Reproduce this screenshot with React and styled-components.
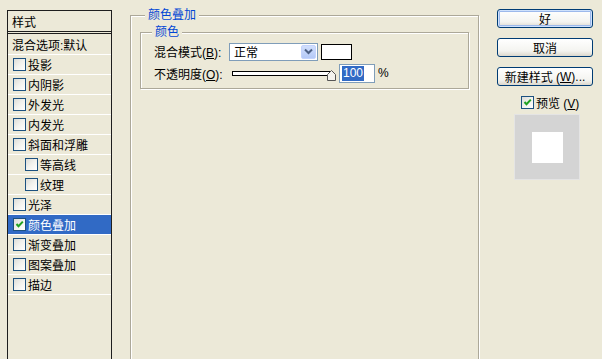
import React from 'react';
import styled, { createGlobalStyle, css } from 'styled-components';

const Global = createGlobalStyle`
  html, body { margin: 0; padding: 0; background: #ECE9D8; }
  body {
    font-family: "Liberation Sans", "Noto Sans CJK SC", sans-serif;
    font-size: 12px;
    color: #000;
  }
  #root { width: 602px; height: 359px; overflow: hidden; }
`;

const Page = styled.div`
  width: 602px;
  height: 359px;
  overflow: hidden;
  display: flex;
  align-items: flex-start;
  background: #ECE9D8;
`;

/* ---------- left styles list ---------- */
const StylesPanel = styled.div`
  margin: 10px 0 0 7px;
  width: 105px;
  height: 360px;
  box-sizing: border-box;
  border: 1px solid #1e1e1e;
  border-bottom: none;
  display: flex;
  flex-direction: column;
`;

const PanelHeader = styled.div`
  height: 20px;
  display: flex;
  align-items: center;
  padding-left: 4px;
  border-bottom: 3px double #1e1e1e;
`;

const BlendRow = styled.div`
  height: 20px;
  display: flex;
  align-items: center;
  padding-left: 4px;
  border-bottom: 1px solid #fff;
`;

const StyleRow = styled.div`
  height: 19px;
  display: flex;
  align-items: center;
  gap: 2px;
  padding-left: ${p => (p.$indent ? 17 : 5)}px;
  border-bottom: 1px solid #fff;
  ${p => p.$selected && css`
    background: #316AC5;
    color: #fff;
  `}
`;

const Box = styled.span`
  width: 13px;
  height: 13px;
  box-sizing: border-box;
  border: 1px solid #1C5180;
  background: linear-gradient(135deg, #DCDCD7 0%, #F2F2EE 50%, #FFFFFF 100%);
  display: inline-flex;
  align-items: center;
  justify-content: center;
  flex: none;
`;

const CheckBox = ({ checked }) => (
  <Box>
    {checked && (
      <svg width="11" height="11" viewBox="0 0 11 11">
        <path d="M2.5 5 L4.5 7.2 L8.8 2.6" fill="none" stroke="#21A121" strokeWidth="2" />
      </svg>
    )}
  </Box>
);

/* ---------- main group ---------- */
const Group = styled.div`
  position: relative;
  box-sizing: border-box;
  border: 1px solid #ACA899;
  box-shadow: inset 1px 1px 0 #fff, 1px 1px 0 #fff;
`;

const OuterGroup = styled(Group)`
  margin: 15px 0 0 18px;
  width: 349px;
  height: 360px;
  padding: 16px 9px 0 9px;
`;

const InnerGroup = styled(Group)`
  width: 329px;
  padding: 9px 0 5px 13px;
  display: flex;
  flex-direction: column;
  gap: 2px;
`;

const GroupTitle = styled.span`
  position: absolute;
  top: -8px;
  left: ${p => p.$left}px;
  padding: 0 3px;
  line-height: 15px;
  background: #ECE9D8;
  color: ${p => p.$color};
`;

const FieldRow = styled.div`
  display: flex;
  align-items: center;
  height: ${p => p.$h}px;
`;

const Label = styled.span`
  width: 75px;
  flex: none;
  white-space: nowrap;
`;

const U = styled.span`
  text-decoration: underline;
`;

const Combo = styled.div`
  width: 89px;
  height: 18px;
  box-sizing: border-box;
  border: 1px solid #7F9DB9;
  background: #fff;
  display: flex;
  align-items: center;
  justify-content: space-between;
  padding: 1px 1px 1px 4px;
`;

const ComboButton = styled.span`
  width: 15px;
  height: 14px;
  border-radius: 2px;
  background: linear-gradient(#D1DFFD, #B4C9F7);
  border: 1px solid #C3D3FD;
  box-sizing: border-box;
  display: flex;
  align-items: center;
  justify-content: center;
`;

const Swatch = styled.span`
  margin-left: 3px;
  width: 31px;
  height: 16px;
  box-sizing: border-box;
  border: 1px solid #000;
  background: #fff;
`;

const Slider = styled.div`
  position: relative;
  margin-left: 3px;
  width: 101px;
  height: 5px;
  box-sizing: border-box;
  border: 1px solid #000;
  background: #fff;
`;

const Thumb = styled.svg`
  position: absolute;
  right: -4px;
  top: -2px;
`;

const NumberBox = styled.div`
  margin-left: 6px;
  width: 36px;
  height: 19px;
  box-sizing: border-box;
  border: 1px solid #7F9DB9;
  background: #fff;
  display: flex;
  align-items: center;
  padding-left: 2px;
`;

const Selected = styled.span`
  background: #316AC5;
  color: #fff;
  line-height: 15px;
  padding: 0 1px;
`;

const Percent = styled.span`
  margin-left: 3px;
`;

/* ---------- right column ---------- */
const Side = styled.div`
  margin: 9px 0 0 18px;
  width: 96px;
  display: flex;
  flex-direction: column;
`;

const Button = styled.div`
  height: 19px;
  box-sizing: border-box;
  margin-bottom: 10px;
  border: 1px solid #003C74;
  border-radius: 3px;
  background: linear-gradient(#FFFFFF 0%, #F4F4F0 70%, #DCD8CD 100%);
  display: flex;
  align-items: center;
  justify-content: center;
  white-space: pre;
  ${p => p.$default && css`
    box-shadow: inset 0 0 0 1px #CEE1FC, inset 0 0 0 2px #9DB9EB;
  `}
`;

const PreviewCheck = styled.div`
  display: flex;
  align-items: center;
  gap: 2px;
  padding-left: 24px;
  height: 13px;
  white-space: pre;
`;

const PreviewBox = styled.div`
  margin: 5px 0 0 17px;
  width: 66px;
  height: 66px;
  box-sizing: border-box;
  border: 1px solid #E4E4E4;
  background: #D4D4D4;
  display: flex;
  align-items: center;
  justify-content: center;
`;

const PreviewInner = styled.div`
  width: 31px;
  height: 31px;
  background: #fff;
`;

const styles = [
  { name: '投影' },
  { name: '内阴影' },
  { name: '外发光' },
  { name: '内发光' },
  { name: '斜面和浮雕' },
  { name: '等高线', indent: true },
  { name: '纹理', indent: true },
  { name: '光泽' },
  { name: '颜色叠加', checked: true, selected: true },
  { name: '渐变叠加' },
  { name: '图案叠加' },
  { name: '描边' },
];

export default function App() {
  return (
    <>
      <Global />
      <Page>
        <StylesPanel>
          <PanelHeader>样式</PanelHeader>
          <BlendRow>混合选项:默认</BlendRow>
          {styles.map(s => (
            <StyleRow key={s.name} $indent={s.indent} $selected={s.selected}>
              <CheckBox checked={s.checked} />
              <span>{s.name}</span>
            </StyleRow>
          ))}
        </StylesPanel>

        <OuterGroup>
          <GroupTitle $left={14} $color="#0046D5">颜色叠加</GroupTitle>
          <InnerGroup>
            <GroupTitle $left={11} $color="#0046D5">颜色</GroupTitle>
            <FieldRow $h={19}>
              <Label>混合模式(<U>B</U>):</Label>
              <Combo>
                <span>正常</span>
                <ComboButton>
                  <svg width="9" height="7" viewBox="0 0 9 7">
                    <path d="M1 1.5 L4.5 5 L8 1.5" fill="none" stroke="#4D6185" strokeWidth="2" />
                  </svg>
                </ComboButton>
              </Combo>
              <Swatch />
            </FieldRow>
            <FieldRow $h={20}>
              <Label>不透明度(<U>O</U>):</Label>
              <Slider>
                <Thumb width="9" height="11" viewBox="0 0 9 11">
                  <path d="M0.5 10.5 L0.5 4.5 L4.5 0.5 L8.5 4.5 L8.5 10.5 Z" fill="#F4F3EE" stroke="#555" />
                </Thumb>
              </Slider>
              <NumberBox>
                <Selected>100</Selected>
              </NumberBox>
              <Percent>%</Percent>
            </FieldRow>
          </InnerGroup>
        </OuterGroup>

        <Side>
          <Button $default>好</Button>
          <Button>取消</Button>
          <Button>新建样式 (<U>W</U>)...</Button>
          <PreviewCheck>
            <CheckBox checked />
            <span>预览 (<U>V</U>)</span>
          </PreviewCheck>
          <PreviewBox>
            <PreviewInner />
          </PreviewBox>
        </Side>
      </Page>
    </>
  );
}
